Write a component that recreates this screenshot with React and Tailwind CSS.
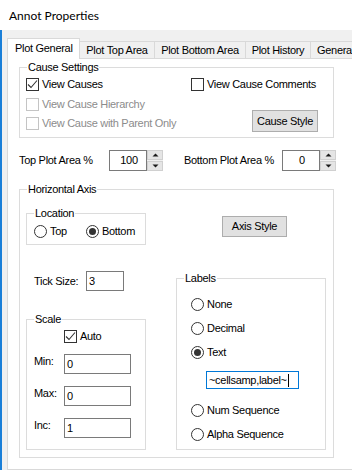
import React from 'react';

const PANEL = 'bg-white';

const Check = ({ checked, disabled, label }) => (
  <div className="flex items-center h-[13px] gap-[3px] whitespace-nowrap">
    <span
      className={`w-[13px] h-[13px] shrink-0 border bg-white flex items-center justify-center ${
        disabled ? 'border-[#c4c4c4]' : 'border-[#333333]'
      }`}
    >
      {checked && (
        <svg width="11" height="11" viewBox="0 0 11 11">
          <path d="M1 5.5 L4 8.5 L10 1.5" fill="none" stroke="#333333" strokeWidth="1.1" />
        </svg>
      )}
    </span>
    <span className={disabled ? 'text-[#8c8c8c]' : 'text-black'}>{label}</span>
  </div>
);

const Radio = ({ checked, label }) => (
  <div className="flex items-center h-[13px] gap-[3px] whitespace-nowrap">
    <span className="w-[13px] h-[13px] shrink-0 rounded-full border border-[#333333] bg-white flex items-center justify-center">
      {checked && <span className="w-[7px] h-[7px] rounded-full bg-[#333333]" />}
    </span>
    <span>{label}</span>
  </div>
);

// group box: padding goes on the body, the caption stays near the left edge
const Group = ({ title, className = '', body = '', children }) => (
  <div className={`border border-[#dcdcdc] ${className}`}>
    <div className={`-mt-[7px] ml-[7px] px-[1px] w-fit whitespace-nowrap ${PANEL}`}>{title}</div>
    <div className={body}>{children}</div>
  </div>
);

const Button = ({ className = '', children }) => (
  <div
    className={`bg-[#e1e1e1] border border-[#adadad] flex items-center justify-center whitespace-nowrap ${className}`}
  >
    {children}
  </div>
);

const Arrow = ({ down }) => (
  <svg width="7" height="4" viewBox="0 0 7 4">
    <path d={down ? 'M0.5 0.5 L6.5 0.5 L3.5 3.5Z' : 'M0.5 3.5 L6.5 3.5 L3.5 0.5Z'} fill="#1a1a1a" />
  </svg>
);

const Spinner = () => (
  <div className="w-[16px] h-[21px] flex flex-col gap-[1px] bg-[#f0f0f0]">
    <div className="flex-1 bg-[#e5e5e5] border border-[#d0d0d0] flex items-center justify-center">
      <Arrow />
    </div>
    <div className="flex-1 bg-[#e5e5e5] border border-[#d0d0d0] flex items-center justify-center">
      <Arrow down />
    </div>
  </div>
);

const Field = ({ className = '', children }) => (
  <div className={`bg-white border border-[#7a7a7a] flex items-center pl-[2px] ${className}`}>{children}</div>
);

export default function App() {
  return (
    <div className="w-[352px] h-[470px] overflow-hidden bg-[#f0f0f0] font-['Liberation_Sans',Arial,sans-serif] text-[11px] leading-[13px] tracking-[-0.3px] text-black flex flex-col">
      <div className="h-[30px] shrink-0 bg-white flex items-center pl-[9px] pt-[1px] font-['Lato',sans-serif] text-[12px] tracking-normal">
        Annot Properties
      </div>

      <div className="flex flex-1 min-h-0">
        <div className="w-[2px] shrink-0 bg-[#1a7fd8]" />
        <div className="flex-1 min-w-0 pl-[5px] pt-[8px] flex flex-col">
          {/* tab strip */}
          <div className="flex items-end h-[20px] whitespace-nowrap">
            <div className="relative z-10 w-[73px] h-[21px] -mb-[1px] border border-b-0 border-[#d9d9d9] bg-white pl-[7px] pt-[3px] shrink-0">
              Plot General
            </div>
            <div className="w-[75px] h-[17px] border-t border-r border-[#d9d9d9] bg-[#f0f0f0] text-center pt-[2px] shrink-0">
              Plot Top Area
            </div>
            <div className="w-[91px] h-[17px] border-t border-r border-[#d9d9d9] bg-[#f0f0f0] text-center pt-[2px] shrink-0">
              Plot Bottom Area
            </div>
            <div className="w-[65px] h-[17px] border-t border-r border-[#d9d9d9] bg-[#f0f0f0] text-center pt-[2px] shrink-0">
              Plot History
            </div>
            <div className="w-[70px] h-[17px] border-t border-r border-[#d9d9d9] bg-[#f0f0f0] pl-[6px] pt-[2px] shrink-0">
              General
            </div>
          </div>

          {/* tab page */}
          <div className={`w-[400px] flex-1 border border-[#d9d9d9] ${PANEL} pl-[11px] pt-[8px]`}>
            <Group title="Cause Settings" className="w-[315px] pb-[5px]" body="pl-[6px]">
              <div className="flex mt-[4px]">
                <div className="w-[165px] flex flex-col">
                  <Check checked label="View Causes" />
                  <div className="mt-[7px]">
                    <Check disabled label="View Cause Hierarchy" />
                  </div>
                  <div className="mt-[6px]">
                    <Check disabled label="View Cause with Parent Only" />
                  </div>
                </div>
                <div className="flex flex-col">
                  <Check label="View Cause Comments" />
                  <Button className="mt-[19px] ml-[61px] w-[66px] h-[22px]">Cause Style</Button>
                </div>
              </div>
            </Group>

            <div className="flex items-center mt-[12px] h-[21px] whitespace-nowrap">
              <span className="w-[90px]">Top Plot Area %</span>
              <Field className="w-[38px] h-[21px] justify-center pl-0">100</Field>
              <Spinner />
              <span className="ml-[21px] w-[98px]">Bottom Plot Area %</span>
              <Field className="w-[38px] h-[21px] justify-center pl-0">0</Field>
              <Spinner />
            </div>

            <Group title="Horizontal Axis" className="mt-[18px] w-[315px] pb-[7px]">
              <div className="flex items-start mt-[17px] pl-[6px]">
                <Group title="Location" className="w-[120px] pb-[6px]" body="pl-[7px]">
                  <div className="flex mt-[5px]">
                    <div className="w-[52px]">
                      <Radio label="Top" />
                    </div>
                    <Radio checked label="Bottom" />
                  </div>
                </Group>
                <Button className="ml-[76px] mt-[3px] w-[65px] h-[21px]">Axis Style</Button>
              </div>

              <div className="flex items-start pl-[6px]">
                <div className="w-[120px]">
                  <div className="flex items-center mt-[26px] pl-[8px] h-[20px]">
                    <span className="w-[52px] whitespace-nowrap">Tick Size:</span>
                    <Field className="w-[38px] h-[20px]">3</Field>
                  </div>
                  <Group title="Scale" className="mt-[28px] pb-[11px]" body="pl-[7px]">
                    <div className="mt-[4px] pl-[30px]">
                      <Check checked label="Auto" />
                    </div>
                    <div className="mt-[11px] flex flex-col gap-[12px]">
                      {[
                        ['Min:', '0'],
                        ['Max:', '0'],
                        ['Inc:', '1'],
                      ].map(([l, v]) => (
                        <div key={l} className="flex items-start h-[20px]">
                          <span className="w-[30px] pt-[1px]">{l}</span>
                          <Field className="w-[67px] h-[20px]">{v}</Field>
                        </div>
                      ))}
                    </div>
                  </Group>
                </div>

                <Group title="Labels" className="ml-[30px] mt-[33px] w-[150px] pb-[8px]" body="pl-[14px]">
                  <div className="mt-[13px]">
                    <Radio label="None" />
                  </div>
                  <div className="mt-[11px]">
                    <Radio label="Decimal" />
                  </div>
                  <div className="mt-[11px]">
                    <Radio checked label="Text" />
                  </div>
                  <div className="mt-[12px] ml-[15px] w-[93px] h-[18px] bg-white border border-[#0078d7] flex items-center pl-[2px] whitespace-nowrap">
                    <span>~cellsamp,label~</span>
                    <span className="ml-[1px] w-[1px] h-[13px] bg-black" />
                  </div>
                  <div className="mt-[15px]">
                    <Radio label="Num Sequence" />
                  </div>
                  <div className="mt-[11px]">
                    <Radio label="Alpha Sequence" />
                  </div>
                </Group>
              </div>
            </Group>
          </div>
        </div>
      </div>
    </div>
  );
}
